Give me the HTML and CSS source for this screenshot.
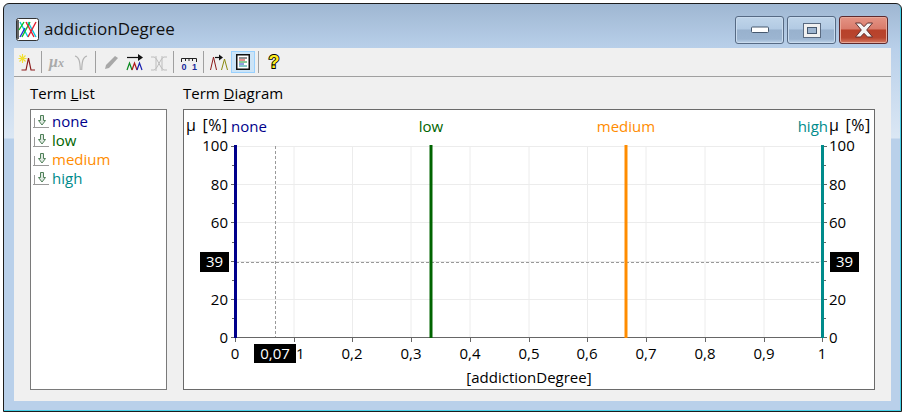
FILE: index.html
```html
<!DOCTYPE html>
<html lang="en">
<head>
  <meta charset="UTF-8">
  <title>addictionDegree</title>
  <link rel="stylesheet" href="styles.css">
</head>
<body>
  <div class="window">
    <div class="titlebar">
      <svg class="app-icon" width="23" height="23" viewBox="0 0 23 23">
        <rect x="0.5" y="0.5" width="22" height="22" rx="2" fill="#fff" stroke="#333"/>
        <path d="M2 2V21" stroke="#222" stroke-width="1.4"/>
        <path d="M4 4L12 19M12 4L20 19" stroke="#00c8e0" stroke-width="1.4" fill="none"/>
        <path d="M6 19L14 4M3 12L8 4" stroke="#10c020" stroke-width="1.4" fill="none"/>
        <path d="M10 4L18 19M20 4L12 19" stroke="#e02030" stroke-width="1.4" fill="none"/>
        <path d="M4 19L9 10" stroke="#2030d0" stroke-width="1.4" fill="none"/>
      </svg>
      <span class="title">addictionDegree</span>
      <div class="caption-btns">
        <div class="cap-btn">
          <svg width="18" height="8" viewBox="0 0 18 8"><rect x="0.5" y="1" width="17" height="5.500" rx="1" fill="#fff" stroke="#46586e"/></svg>
        </div>
        <div class="cap-btn">
          <svg width="18" height="15" viewBox="0 0 18 15"><rect x="0.5" y="0.5" width="17" height="14" fill="#f0f0f0" stroke="#5a6a80"/><rect x="4.500" y="4.500" width="9" height="6" fill="#9db5d0" stroke="#46586e"/></svg>
        </div>
        <div class="cap-btn close">
          <svg width="20" height="16" viewBox="0 0 20 16"><path d="M1.500 1H6.500L10 4.700L13.500 1H18.500L12.700 8L18.500 15H13.500L10 11.300L6.500 15H1.500L7.300 8Z" fill="#f4f4f4" stroke="#5e3030"/></svg>
        </div>
      </div>
    </div>

    <div class="client">
      <div class="toolbar">
        <div class="tb-btn">
          <svg width="18" height="18" viewBox="0 0 18 18">
            <path d="M4.500 1V10M0.500 5.500H8.500M1.500 2.500L7.500 8.500M7.500 2.500L1.500 8.500" stroke="#f2e030" stroke-width="1.100"/>
            <path d="M3.500 17H8L10.500 5L13 17H17" fill="none" stroke="#8b1a1a" stroke-width="1.200"/>
          </svg>
        </div>
        <div class="tb-sep"></div>
        <div class="tb-btn"><span class="tb-mu">μ<small>x</small></span></div>
        <div class="tb-btn">
          <svg width="18" height="18" viewBox="0 0 18 18"><path d="M3 3C7 4 8 8 8.300 17M15 3C11 4 10 8 9.700 17" fill="none" stroke="#b4b4b4" stroke-width="1.200"/></svg>
        </div>
        <div class="tb-sep"></div>
        <div class="tb-btn">
          <svg width="18" height="18" viewBox="0 0 18 18"><path d="M3 16L4 12L13 3L16 5L7 15Z" fill="#a8a8a8"/></svg>
        </div>
        <div class="tb-btn">
          <svg width="18" height="18" viewBox="0 0 18 18">
            <path d="M1 4.500H14" stroke="#111" stroke-width="1.200"/><path d="M12 1L17 4.500L12 8Z" fill="#111"/>
            <path d="M1 17L3.500 10L6 17" fill="none" stroke="#0a8a20" stroke-width="1.200"/>
            <path d="M6 17L8.500 10L11 17" fill="none" stroke="#b01818" stroke-width="1.200"/>
            <path d="M11 17L13.500 10L16 17" fill="none" stroke="#1820b0" stroke-width="1.200"/>
          </svg>
        </div>
        <div class="tb-btn">
          <svg width="18" height="18" viewBox="0 0 18 18"><path d="M1 4H4C7 4 11 17 14 17H17M1 17H4C7 17 11 4 14 4H17M6 3V18M12 3V18" fill="none" stroke="#bcbcbc" stroke-width="1"/></svg>
        </div>
        <div class="tb-sep"></div>
        <div class="tb-btn">
          <svg width="18" height="18" viewBox="0 0 18 18">
            <path d="M1.500 9V5.500H16.500V9M5.500 5.500V8M9 5.500V8M12.500 5.500V8" fill="none" stroke="#222" stroke-width="1"/>
            <text class="tb-ruler" x="1.500" y="17">0</text><text class="tb-ruler" x="12" y="17">1</text>
          </svg>
        </div>
        <div class="tb-sep"></div>
        <div class="tb-btn">
          <svg width="18" height="18" viewBox="0 0 18 18">
            <path d="M0.500 17L3.500 4L6.500 17" fill="none" stroke="#8b1a1a" stroke-width="1"/>
            <path d="M11.500 17L14.500 6L17.500 17" fill="none" stroke="#8a8a10" stroke-width="1"/>
            <path d="M5 4.500H10" stroke="#111" stroke-width="1.200"/><path d="M9 1.500L13 4.500L9 7.500Z" fill="#111"/>
          </svg>
        </div>
        <div class="tb-btn active">
          <svg width="14" height="16" viewBox="0 0 14 16">
            <rect x="0.750" y="0.750" width="12.500" height="14.500" fill="#fff" stroke="#111" stroke-width="1.500"/>
            <path d="M3 4H11" stroke="#222"/><path d="M3 6H9" stroke="#d02020"/><path d="M3 8H11" stroke="#109030"/><path d="M3 10H8" stroke="#2040c0"/><path d="M3 12H11" stroke="#109090"/>
          </svg>
        </div>
        <div class="tb-sep"></div>
        <div class="tb-btn">
          <svg width="16" height="20" viewBox="0 0 16 20"><text class="tb-help" x="8" y="16">?</text></svg>
        </div>
      </div>

      <div class="panes">
        <div class="pane-label"><span>Term <u>L</u>ist</span></div>
        <div class="pane-label"><span>Term <u>D</u>iagram</span></div>

        <ul class="term-list">
          <li class="term none"><svg class="term-icon" width="17" height="14" viewBox="0 0 17 14"><path d="M0 13.500H16M1.500 4V13" stroke="#999"/><path d="M7.500 1.500H10.500V6.500H12.500L9 11L5.500 6.500H7.500Z" fill="#dfe9e1" stroke="#4f8059"/></svg>none</li>
          <li class="term low"><svg class="term-icon" width="17" height="14" viewBox="0 0 17 14"><path d="M0 13.500H16M1.500 4V13" stroke="#999"/><path d="M7.500 1.500H10.500V6.500H12.500L9 11L5.500 6.500H7.500Z" fill="#dfe9e1" stroke="#4f8059"/></svg>low</li>
          <li class="term medium"><svg class="term-icon" width="17" height="14" viewBox="0 0 17 14"><path d="M0 13.500H16M1.500 4V13" stroke="#999"/><path d="M7.500 1.500H10.500V6.500H12.500L9 11L5.500 6.500H7.500Z" fill="#dfe9e1" stroke="#4f8059"/></svg>medium</li>
          <li class="term high"><svg class="term-icon" width="17" height="14" viewBox="0 0 17 14"><path d="M0 13.500H16M1.500 4V13" stroke="#999"/><path d="M7.500 1.500H10.500V6.500H12.500L9 11L5.500 6.500H7.500Z" fill="#dfe9e1" stroke="#4f8059"/></svg>high</li>
        </ul>

        <div class="diagram">
          <!-- viewBox keeps the window's pixel coordinates -->
          <svg class="chart" width="690" height="279" viewBox="184 110 690 279">
            <g class="grid">
              <path d="M294 146V337M352.500 146V337M411 146V337M470 146V337M529 146V337M587.500 146V337M646 146V337M705 146V337M764 146V337"/>
              <path d="M236 146.500H822M236 184.500H822M236 222.500H822M236 261.500H822M236 299.500H822"/>
            </g>
            <g class="axis">
              <path d="M236 337.500H822"/>
              <path d="M231 146.500H235M231 184.500H235M231 222.500H235M231 261.500H235M231 299.500H235M231 337.500H235M232 165.500H235M232 203.500H235M232 242.500H235M232 280.500H235M232 318.500H235"/>
              <path d="M823 146.500H827M823 184.500H827M823 222.500H827M823 261.500H827M823 299.500H827M823 337.500H827M823 165.500H826M823 203.500H826M823 242.500H826M823 280.500H826M823 318.500H826"/>
              <path d="M235.500 337V342M294.500 337V342M352.500 337V342M411.500 337V342M470.500 337V342M529.500 337V342M587.500 337V342M646.500 337V342M705.500 337V342M764.500 337V342M822.500 337V342"/>
            </g>
            <g class="cursor">
              <path d="M275.500 146V337"/>
              <path d="M236 262.500H822"/>
            </g>
            <path class="line-none" d="M235.500 145V338"/>
            <path class="line-low" d="M431 145V338"/>
            <path class="line-medium" d="M626 145V338"/>
            <path class="line-high" d="M822.500 145V338"/>

            <text class="mu-label" x="186" y="131">μ [%]</text>
            <text class="mu-label" x="829" y="131">μ [%]</text>
            <text class="t-none" x="231" y="132">none</text>
            <text class="t-low mid" x="431" y="132">low</text>
            <text class="t-medium mid" x="626" y="132">medium</text>
            <text class="t-high end" x="828" y="132">high</text>

            <text class="end" x="228" y="151">100</text>
            <text class="end" x="228" y="190">80</text>
            <text class="end" x="228" y="228">60</text>
            <text class="end" x="228" y="305">20</text>
            <text class="end" x="228" y="343">0</text>
            <text x="829" y="151">100</text>
            <text x="829" y="190">80</text>
            <text x="829" y="228">60</text>
            <text x="829" y="305">20</text>
            <text x="829" y="343">0</text>

            <text class="mid" x="235" y="359">0</text>
            <text class="mid" x="294" y="359">0,1</text>
            <text class="mid" x="352" y="359">0,2</text>
            <text class="mid" x="411" y="359">0,3</text>
            <text class="mid" x="470" y="359">0,4</text>
            <text class="mid" x="529" y="359">0,5</text>
            <text class="mid" x="587" y="359">0,6</text>
            <text class="mid" x="646" y="359">0,7</text>
            <text class="mid" x="705" y="359">0,8</text>
            <text class="mid" x="764" y="359">0,9</text>
            <text class="mid" x="822" y="359">1</text>
            <text class="mid" x="529" y="383">[addictionDegree]</text>

            <rect class="tag" x="200" y="252" width="29" height="20"/>
            <text class="tag-text mid" x="214.500" y="267">39</text>
            <rect class="tag" x="830" y="252" width="29" height="20"/>
            <text class="tag-text mid" x="844.500" y="267">39</text>
            <rect class="tag" x="254" y="344" width="42" height="19"/>
            <text class="tag-text mid" x="275" y="359">0,07</text>
          </svg>
        </div>
      </div>
    </div>
  </div>
</body>
</html>
```

FILE: styles.css
```css
* {
  box-sizing: border-box;
}

body {
  margin: 0;
  background: #fff;
  font-family: "Open Sans", "Noto Sans", sans-serif;
  color: #000;
}

.window {
  width: 899px;
  height: 409px;
  margin: 3px 0 0 3px;
  padding: 0 10px 10px;
  display: flex;
  flex-direction: column;
  border: 1px solid #1c1c1c;
  border-radius: 6px 6px 0 0;
  background: linear-gradient(180deg, #9fb7d2 0, #b9d0ea 45px, #dbe7f4 134px, #b9d0ea 135px);
  box-shadow: inset -1px -1px 0 #45cfe6;
}

/* title bar */
.titlebar {
  height: 44px;
  flex: none;
  display: flex;
  align-items: flex-start;
}

.app-icon {
  margin: 14px 0 0 2px;
}

.title {
  margin: 13px 0 0 5px;
  font-family: "Open Sans", sans-serif;
  font-size: 17px;
  line-height: 24px;
  color: #111;
}

.caption-btns {
  margin: 12px 3px 0 auto;
  display: flex;
  gap: 3px;
}

.cap-btn {
  width: 49px;
  height: 28px;
  display: flex;
  align-items: center;
  justify-content: center;
  border: 1px solid #566a84;
  border-radius: 3px;
  background: linear-gradient(180deg, #c0d5ea 0, #b2cae3 46%, #98b1cd 50%, #9cb5d1 85%, #bdd2e8 100%);
  box-shadow: inset 0 0 0 1px #c9dbee;
}

.cap-btn.close {
  border-color: #5e2a2e;
  background: linear-gradient(180deg, #e49485 0, #d97b6b 46%, #b8412a 50%, #b8452e 80%, #d67a62 100%);
  box-shadow: inset 0 0 0 1px #e8a898;
}

/* client area */
.client {
  flex: 1;
  min-height: 0;
  display: flex;
  flex-direction: column;
  background: #f0f0f0;
}

.toolbar {
  height: 29px;
  flex: none;
  padding: 1px 0 2px 1px;
  display: flex;
  align-items: center;
  gap: 1px;
  border-bottom: 1px solid #a0a0a0;
}

.tb-btn {
  width: 23px;
  height: 22px;
  display: flex;
  align-items: center;
  justify-content: center;
}

.tb-btn.active {
  width: 24px;
  background: #cce4f7;
  border: 1px solid #99d1ff;
}

.tb-sep {
  width: 1px;
  height: 22px;
  margin: 0 2px;
  background: #a0a0a0;
}

.tb-mu {
  font-family: "Liberation Serif", serif;
  font-size: 16px;
  font-weight: bold;
  font-style: italic;
  color: #aaa;
}

.tb-mu small {
  font-size: 12px;
}

.tb-ruler {
  font-family: "Liberation Sans", sans-serif;
  font-size: 9px;
  font-weight: bold;
  fill: #1a2a9c;
}

.tb-help {
  font-family: "Liberation Sans", sans-serif;
  font-size: 18px;
  font-weight: bold;
  text-anchor: middle;
  fill: #ffee20;
  stroke: #000;
  stroke-width: 1.8;
  paint-order: stroke;
}

.panes {
  flex: 1;
  min-height: 0;
  padding: 0 16px 11px;
  display: grid;
  grid-template-columns: 137px 692px;
  grid-template-rows: 32px 1fr;
  column-gap: 16px;
}

.pane-label {
  display: flex;
  align-items: center;
  font-size: 15px;
}

.term-list {
  margin: 0;
  padding: 1px 0 0 2px;
  list-style: none;
  background: #fff;
  border: 1px solid #7a7a7a;
}

.term {
  height: 19px;
  display: flex;
  align-items: center;
  gap: 2px;
  font-size: 15px;
}

.term.none { color: #00008b; }
.term.low { color: #006400; }
.term.medium { color: #ff8c00; }
.term.high { color: #008b8b; }

.diagram {
  background: #fff;
  border: 1px solid #6a6a6a;
}

.chart {
  display: block;
}

.chart text {
  font-family: "Open Sans", "Noto Sans", sans-serif;
  font-size: 15px;
  fill: #000;
}

.chart text.mu-label {
  font-size: 16px;
  letter-spacing: 0.5px;
  word-spacing: 1.5px;
}

.chart text.mid { text-anchor: middle; }
.chart text.end { text-anchor: end; }
.chart text.t-none { fill: #00008b; }
.chart text.t-low { fill: #006400; }
.chart text.t-medium { fill: #ff8c00; }
.chart text.t-high { fill: #008b8b; }
.chart text.tag-text { fill: #fff; }

.grid path {
  stroke: #ececec;
  fill: none;
}

.axis path {
  stroke: #666;
  fill: none;
}

.cursor path {
  stroke: #999;
  stroke-dasharray: 3 2;
  fill: none;
}

.line-none, .line-low, .line-medium, .line-high {
  stroke-width: 3;
  fill: none;
}

.line-none { stroke: #00008b; }
.line-low { stroke: #006400; }
.line-medium { stroke: #ff8c00; }
.line-high { stroke: #008b8b; }

.tag {
  fill: #000;
}
```
